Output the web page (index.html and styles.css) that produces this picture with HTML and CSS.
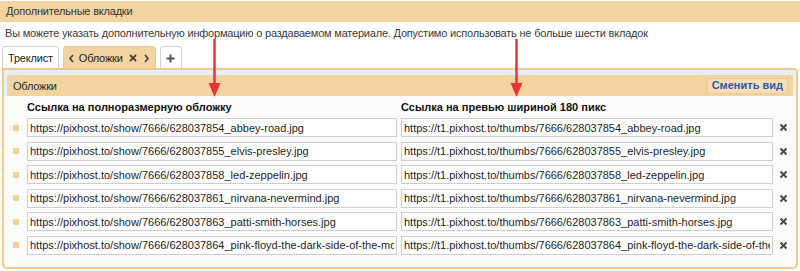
FILE: index.html
```html
<html>
<head>
	<meta charset="utf-8">
	<link rel="stylesheet" href="styles.css">
</head>
<body>
	<div class="top-bar">Дополнительные вкладки</div>
	<p class="note">Вы можете указать дополнительную информацию о раздаваемом материале. Допустимо использовать не больше шести вкладок</p>

	<div class="tabs">
		<div class="tab">Треклист</div>
		<div class="tab tab-active">
			<svg class="ico" width="7" height="9" viewBox="0 0 7 9"><path d="M5 1 L2 4.5 L5 8" /></svg>
			<span class="tab-name">Обложки</span>
			<svg class="ico ico-close" width="8" height="8" viewBox="0 0 8 8"><path d="M1 1 L7 7 M7 1 L1 7" /></svg>
			<svg class="ico ico-next" width="7" height="9" viewBox="0 0 7 9"><path d="M2 1 L5 4.5 L2 8" /></svg>
		</div>
		<div class="tab tab-add">
			<svg class="ico ico-plus" width="9" height="9" viewBox="0 0 9 9"><path d="M4.5 0.5 V8.5 M0.5 4.5 H8.5" /></svg>
		</div>
	</div>

	<div class="panel">
		<div class="panel-head">
			<span>Обложки</span>
			<button class="btn-view">Сменить вид</button>
		</div>

		<div class="covers covers-head">
			<span></span>
			<b>Ссылка на полноразмерную обложку</b>
			<b>Ссылка на превью шириной 180 пикс</b>
			<span></span>
		</div>

		<div class="covers" id="rows">
			<i class="handle"></i>
			<input type="text" value="https://pixhost.to/show/7666/628037854_abbey-road.jpg" />
			<input type="text" value="https://t1.pixhost.to/thumbs/7666/628037854_abbey-road.jpg" />
			<svg class="del" width="9" height="9" viewBox="0 0 9 9"><path d="M1.5 1.5 L7.5 7.5 M7.5 1.5 L1.5 7.5" /></svg>

			<i class="handle"></i>
			<input type="text" value="https://pixhost.to/show/7666/628037855_elvis-presley.jpg" />
			<input type="text" value="https://t1.pixhost.to/thumbs/7666/628037855_elvis-presley.jpg" />
			<svg class="del" width="9" height="9" viewBox="0 0 9 9"><path d="M1.5 1.5 L7.5 7.5 M7.5 1.5 L1.5 7.5" /></svg>

			<i class="handle"></i>
			<input type="text" value="https://pixhost.to/show/7666/628037858_led-zeppelin.jpg" />
			<input type="text" value="https://t1.pixhost.to/thumbs/7666/628037858_led-zeppelin.jpg" />
			<svg class="del" width="9" height="9" viewBox="0 0 9 9"><path d="M1.5 1.5 L7.5 7.5 M7.5 1.5 L1.5 7.5" /></svg>

			<i class="handle"></i>
			<input type="text" value="https://pixhost.to/show/7666/628037861_nirvana-nevermind.jpg" />
			<input type="text" value="https://t1.pixhost.to/thumbs/7666/628037861_nirvana-nevermind.jpg" />
			<svg class="del" width="9" height="9" viewBox="0 0 9 9"><path d="M1.5 1.5 L7.5 7.5 M7.5 1.5 L1.5 7.5" /></svg>

			<i class="handle"></i>
			<input type="text" value="https://pixhost.to/show/7666/628037863_patti-smith-horses.jpg" />
			<input type="text" value="https://t1.pixhost.to/thumbs/7666/628037863_patti-smith-horses.jpg" />
			<svg class="del" width="9" height="9" viewBox="0 0 9 9"><path d="M1.5 1.5 L7.5 7.5 M7.5 1.5 L1.5 7.5" /></svg>

			<i class="handle"></i>
			<input type="text" value="https://pixhost.to/show/7666/628037864_pink-floyd-the-dark-side-of-the-moon.jpg" />
			<input type="text" value="https://t1.pixhost.to/thumbs/7666/628037864_pink-floyd-the-dark-side-of-the-moon.jpg" />
			<svg class="del" width="9" height="9" viewBox="0 0 9 9"><path d="M1.5 1.5 L7.5 7.5 M7.5 1.5 L1.5 7.5" /></svg>
		</div>
	</div>

	<!-- red arrows drawn over the page -->
	<svg class="arrows" width="800" height="271" viewBox="0 0 800 271">
		<path d="M214.5 39 V85" />
		<polygon points="208.5,83 220.5,83 214.5,97" />
		<path d="M516.5 39 V85" />
		<polygon points="510.5,83 522.5,83 516.5,97" />
	</svg>
</body>
</html>
```

FILE: styles.css
```css
body {margin:0;font:11px "Liberation Sans", Arial, sans-serif;color:#2b2b2b;background:#fff;width:800px;position:relative;}
p {margin:0;}

.top-bar {margin-top:1px;height:21px;line-height:21px;padding-left:6px;background:#f3d39f;color:#333;letter-spacing:-0.2px;}
.note {height:22px;line-height:22px;padding-left:5px;color:#3a3a3a;letter-spacing:-0.2px;}

.tabs {display:flex;gap:4px;margin:2px 0 0 2px;height:22px;letter-spacing:-0.2px;}
.tab {display:flex;align-items:center;box-sizing:border-box;height:22px;padding:1px 5px 0;
	border:1px solid #cfcfcf;border-bottom:none;border-radius:4px 4px 0 0;background:#fff;color:#222;}
.tab-active {background:#f3d39f;border-color:#e9c68c;padding:1px 5px 0 4px;}
.tab-active .tab-name {margin:0 6px 0 4px;}
.tab-active .ico-next {margin-left:6px;}
.tab-add {width:22px;justify-content:center;padding:1px 0 0;}
.ico path {fill:none;stroke:#444;stroke-width:1.8;}
.ico-plus path {stroke:#555;stroke-width:2;}

.panel {margin:0 2px;border:2px solid #f0c88c;border-radius:0 4px 5px 5px;padding:5px 3px 12px;
	background:linear-gradient(#e3f1fa 0, #e3f1fa 26px, #fbfbfa 26px);}
.panel-head {display:flex;align-items:center;justify-content:space-between;height:21px;padding:0 5px 0 6px;background:#f3d39f;color:#2b2b2b;letter-spacing:-0.2px;}
.btn-view {font:bold 11px "Liberation Sans", Arial, sans-serif;color:#2f55a8;background:#f6dfb6;
	border:1px solid #e9cb98;border-radius:2px;height:16px;padding:0 4px;line-height:13px;}

.covers {display:grid;grid-template-columns:16px 370px 372px 1fr;column-gap:4px;}
.covers-head {margin-top:4px;height:14px;line-height:14px;color:#111;}
#rows {margin-top:4px;row-gap:4.6px;align-items:center;}
.handle {display:block;width:6px;height:6px;margin-left:6px;background:#f2cf96;}
#rows input {box-sizing:border-box;height:19px;width:100%;margin:0;padding:0 2px;border:1px solid #cdcdcd;
	background:#fff;font:11px "Liberation Sans", Arial, sans-serif;color:#1e1e1e;}
.del {margin-left:2px;}
.del path {fill:none;stroke:#4a4a4a;stroke-width:2;}

.arrows {position:absolute;left:0;top:0;pointer-events:none;}
.arrows path {stroke:#e8333a;stroke-width:2.5;fill:none;}
.arrows polygon {fill:#e8333a;}
```
